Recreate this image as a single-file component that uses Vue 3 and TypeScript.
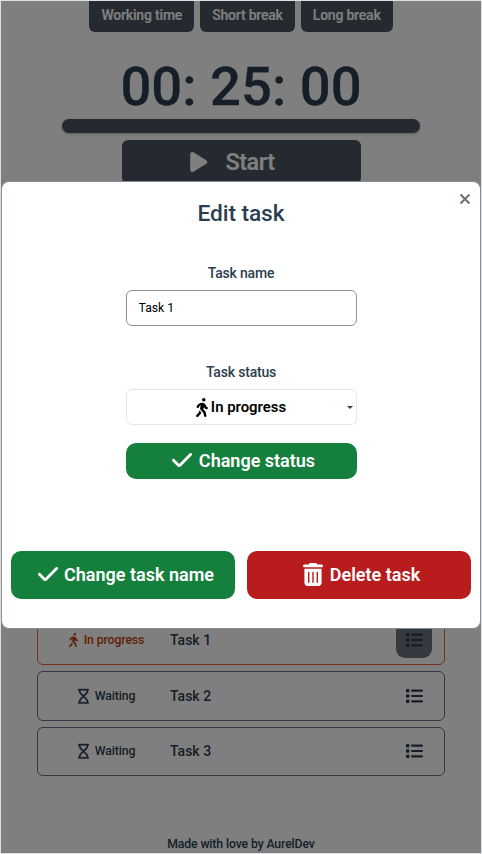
<script setup lang="ts">
import { ref } from 'vue'

interface Task {
  name: string
  status: 'In progress' | 'Waiting'
}

const modes: string[] = ['Working time', 'Short break', 'Long break']
const tasks: Task[] = [
  { name: 'Task 1', status: 'In progress' },
  { name: 'Task 2', status: 'Waiting' },
  { name: 'Task 3', status: 'Waiting' },
]
const taskName = ref('Task 1')

const walking =
  'M160 48a48 48 0 1 1 96 0 48 48 0 1 1-96 0zM126.5 199.3c-1 .4-1.9 .8-2.9 1.2l-8 3.5c-16.4 7.3-29 21.2-34.7 38.2l-2.6 7.8c-5.6 16.8-23.7 25.8-40.5 20.2s-25.8-23.7-20.2-40.5l2.6-7.8c11.4-34.1 36.6-61.9 69.4-76.5l8-3.5c20.8-9.2 43.3-14 66.1-14c44.6 0 84.8 26.8 101.9 67.9L281 232.7l21.4 10.7c15.8 7.9 22.2 27.1 14.3 42.9s-27.1 22.2-42.9 14.3L247 287.3c-10.3-5.2-18.4-13.8-22.8-24.5l-9.6-23-19.3 65.5 49.5 54c5.4 5.9 9.2 13 11.2 20.8l23 92.1c4.3 17.1-6.1 34.5-23.3 38.8s-34.5-6.1-38.8-23.3l-22-88.1-70.7-77.1c-14.8-16.1-20.3-38.6-14.7-59.7l16.9-63.5zM68.7 398l25-62.4c2.1 3 4.5 5.8 7 8.6l40.7 44.4-14.5 36.2c-2.4 6-6 11.5-10.6 16.1L54.6 502.6c-12.5 12.5-32.8 12.5-45.3 0s-12.5-32.8 0-45.3L68.7 398z'
const hourglass =
  'M0 24C0 10.7 10.7 0 24 0H360c13.3 0 24 10.7 24 24s-10.7 24-24 24h-8V67c0 40.3-16 79-44.5 107.5L225.9 256l81.5 81.5C336 366 352 404.7 352 445v19h8c13.3 0 24 10.7 24 24s-10.7 24-24 24H24c-13.3 0-24-10.7-24-24s10.7-24 24-24h8V445c0-40.3 16-79 44.5-107.5L158.1 256 76.5 174.5C48 146 32 107.3 32 67V48H24C10.7 48 0 37.3 0 24zM110.5 371.5C91 391 80 417.4 80 445v19H304V445c0-27.6-11-54-30.5-73.5L192 289.9zM192 222.1l81.5-81.6C293 121 304 94.6 304 67V48H80V67c0 27.6 11 54 30.5 73.5z'
const check =
  'M438.6 105.4c12.5 12.5 12.5 32.8 0 45.3l-256 256c-12.5 12.5-32.8 12.5-45.3 0l-128-128c-12.5-12.5-12.5-32.8 0-45.3s32.8-12.5 45.3 0L160 338.7 393.4 105.4c12.5-12.5 32.8-12.5 45.3 0z'
const play =
  'M73 39c-14.8-9.1-33.4-9.4-48.5-.9S0 62.6 0 80V432c0 17.4 9.4 33.4 24.5 41.9s33.7 8.1 48.5-.9L361 297c14.3-8.7 23-24.2 23-41s-8.7-32.2-23-41L73 39z'
const trash =
  'M135.2 17.7L128 32H32C14.3 32 0 46.3 0 64S14.3 96 32 96H416c17.7 0 32-14.3 32-32s-14.3-32-32-32H320l-7.2-14.3C307.4 6.8 296.3 0 284.2 0H163.8c-12.1 0-23.2 6.8-28.6 17.7zM416 128H32V448c0 35.3 28.7 64 64 64H352c35.3 0 64-28.7 64-64V128zM144 208V432c0 8.8-7.2 16-16 16s-16-7.2-16-16V208c0-8.8 7.2-16 16-16s16 7.2 16 16zm96 0V432c0 8.8-7.2 16-16 16s-16-7.2-16-16V208c0-8.8 7.2-16 16-16s16 7.2 16 16zm96 0V432c0 8.8-7.2 16-16 16s-16-7.2-16-16V208c0-8.8 7.2-16 16-16s16 7.2 16 16z'
</script>

<template>
  <div class="screen">
    <main class="page">
      <nav class="modes">
        <button v-for="mode in modes" :key="mode" class="mode">{{ mode }}</button>
      </nav>
      <div class="timer">00: 25: 00</div>
      <div class="progress"></div>
      <button class="start">
        <svg class="play" viewBox="0 32 384 448"><path :d="play" /></svg>
        <span>Start</span>
      </button>
      <section class="tasks">
        <article
          v-for="task in tasks"
          :key="task.name"
          class="task"
          :class="{ active: task.status === 'In progress' }"
        >
          <div class="state">
            <svg v-if="task.status === 'In progress'" class="walk" viewBox="0 0 320 512"><path :d="walking" /></svg>
            <svg v-else class="glass" viewBox="0 0 384 512"><path :d="hourglass" /></svg>
            <span>{{ task.status }}</span>
          </div>
          <h3 class="name">{{ task.name }}</h3>
          <button class="menu" aria-label="Edit">
            <svg viewBox="0 0 17 14">
              <g v-for="y in [0, 5.3, 10.6]" :key="y">
                <rect x="0" :y="y" width="3.4" height="3.4" rx="0.9" />
                <rect x="5" :y="y + 0.6" width="12" height="2.2" rx="1.1" />
              </g>
            </svg>
          </button>
        </article>
      </section>
      <footer class="footer">Made with love by AurelDev</footer>
    </main>

    <div class="overlay">
      <div class="modal">
        <button class="close" aria-label="Close">
          <svg viewBox="0 0 12 12"><path d="M1.5 1.5l9 9M10.5 1.5l-9 9" /></svg>
        </button>
        <h2 class="title">Edit task</h2>
        <label class="label label-name">Task name</label>
        <input v-model="taskName" class="input" type="text" />
        <label class="label label-status">Task status</label>
        <div class="select">
          <svg class="select-icon" viewBox="0 0 320 512"><path :d="walking" /></svg>
          <span>In progress</span>
          <i class="caret"></i>
        </div>
        <button class="btn green status-btn">
          <svg class="check" viewBox="0 96 448 320"><path :d="check" /></svg>
          <span>Change status</span>
        </button>
        <div class="actions">
          <button class="btn green">
            <svg class="check" viewBox="0 96 448 320"><path :d="check" /></svg>
            <span>Change task name</span>
          </button>
          <button class="btn red">
            <svg class="trash" viewBox="0 0 448 512"><path :d="trash" /></svg>
            <span>Delete task</span>
          </button>
        </div>
      </div>
    </div>
  </div>
</template>

<style>
body {
  overflow: hidden;
}
</style>

<style scoped>
* {
  box-sizing: border-box;
}
.screen {
  position: relative;
  width: 482px;
  height: 854px;
  overflow: hidden;
  border: 1px solid #dcdfe4;
  background: #fff;
  color: #2c3e50;
  font-family: Roboto, sans-serif;
}
button {
  border: 0;
  padding: 0;
  font-family: inherit;
  color: inherit;
}
svg {
  display: block;
  fill: currentColor;
  flex: none;
}
.page {
  height: 852px;
  display: flex;
  flex-direction: column;
  align-items: center;
}
.modes {
  display: flex;
  gap: 6px;
  height: 30.5px;
  flex: none;
}
.mode {
  height: 36.5px;
  margin-top: -6px;
  padding: 4px 12px 0;
  border-radius: 6px;
  background: #4b5563;
  color: #fff;
  font-size: 14px;
  font-weight: 600;
  letter-spacing: -0.22px;
}
.timer {
  height: 66px;
  margin-top: 22.5px;
  margin-bottom: -1px;
  font-size: 54.4px;
  line-height: 66px;
  font-weight: 500;
  -webkit-text-stroke: 0.3px currentColor;
  flex: none;
}
.progress {
  width: 358px;
  height: 14px;
  border-radius: 7px;
  background: #4b5563;
  box-shadow: 0 1px 3px rgba(0, 0, 0, 0.3);
  flex: none;
}
.start {
  display: flex;
  align-items: center;
  justify-content: center;
  gap: 17.5px;
  width: 239px;
  height: 44px;
  margin-top: 7px;
  padding-right: 17px;
  border-radius: 6px;
  background: #4b5563;
  color: #fff;
  font-size: 23.5px;
  font-weight: 600;
  letter-spacing: -0.55px;
  flex: none;
}
.play {
  width: 17.5px;
  height: 20px;
}
.tasks {
  display: flex;
  flex-direction: column;
  gap: 6px;
  width: 408px;
  margin-top: 431.5px;
}
.task {
  display: grid;
  grid-template-columns: 132px 1fr 48px;
  align-items: center;
  height: 49.6px;
  border: 1px solid #6b7280;
  border-radius: 6px;
}
.task.active {
  border-color: #e2683f;
}
.state {
  display: flex;
  align-items: center;
  justify-content: center;
  gap: 6px;
  padding-left: 5px;
  font-size: 12.25px;
  font-weight: 500;
  letter-spacing: -0.1px;
}
.active .state {
  color: #c2410c;
}
.walk {
  width: 9px;
  height: 14px;
}
.glass {
  width: 11px;
  height: 14.5px;
  stroke: currentColor;
  stroke-width: 16;
  overflow: visible;
}
.name {
  margin: 0;
  font-size: 14px;
  font-weight: 500;
}
.menu {
  display: grid;
  place-items: center;
  width: 36px;
  height: 36px;
  border-radius: 9px;
  background: transparent;
}
.active .menu {
  background: #6b7280;
}
.menu svg {
  width: 17px;
  height: 14px;
}
.footer {
  margin-top: 59.5px;
  font-size: 12.25px;
  line-height: 16px;
  font-weight: 500;
  letter-spacing: -0.12px;
}
.overlay {
  position: absolute;
  inset: 0;
  display: flex;
  flex-direction: column;
  background: rgba(0, 0, 0, 0.5);
}
.modal {
  position: relative;
  display: flex;
  flex-direction: column;
  align-items: center;
  height: 448px;
  margin-top: 180px;
  border: 1px solid #868b95;
  border-radius: 8px;
  background: #fff;
}
.close {
  position: absolute;
  top: 11px;
  right: 9px;
  width: 12px;
  height: 12px;
  background: transparent;
}
.close svg {
  width: 12px;
  height: 12px;
  stroke: #6b7280;
  stroke-width: 2.1;
}
.title {
  height: 30px;
  margin: 17px 0 0;
  font-size: 22.75px;
  line-height: 30px;
  font-weight: 500;
  letter-spacing: -0.1px;
}
.label {
  height: 20px;
  font-size: 14px;
  line-height: 20px;
  font-weight: 500;
  letter-spacing: -0.18px;
}
.label-name {
  margin-top: 34px;
}
.input {
  width: 231px;
  height: 36px;
  margin-top: 7px;
  padding: 0 12px;
  border: 1px solid #8b909c;
  border-radius: 6px;
  background: #fff;
  color: #000;
  font: 400 12.25px Roboto, sans-serif;
  outline: 0;
}
.label-status {
  margin-top: 36px;
}
.select {
  position: relative;
  display: flex;
  align-items: center;
  justify-content: center;
  gap: 3px;
  width: 231px;
  height: 36px;
  margin-top: 7px;
  border: 1px solid #e5e7eb;
  border-radius: 6px;
  color: #000;
  font-size: 14.9px;
  font-weight: 600;
}
.select-icon {
  width: 12px;
  height: 19px;
}
.caret {
  position: absolute;
  right: 3px;
  top: 15.5px;
  border: 3.5px solid transparent;
  border-top-color: #374151;
  border-bottom: 0;
}
.btn {
  display: flex;
  align-items: center;
  justify-content: center;
  gap: 6.5px;
  padding: 0 0 2px 5.5px;
  border-radius: 10px;
  color: #fff;
  font-size: 18px;
  font-weight: 600;
}
.green {
  background: #15803d;
}
.red {
  background: #b91c1c;
}
.status-btn {
  width: 231px;
  height: 36px;
  margin-top: 18px;
}
.check {
  width: 20px;
  height: 14.5px;
}
.trash {
  width: 20px;
  height: 23px;
}
.actions {
  display: grid;
  grid-template-columns: 1fr 1fr;
  gap: 12px;
  width: 460px;
  height: 48px;
  margin-top: 72px;
}
</style>
